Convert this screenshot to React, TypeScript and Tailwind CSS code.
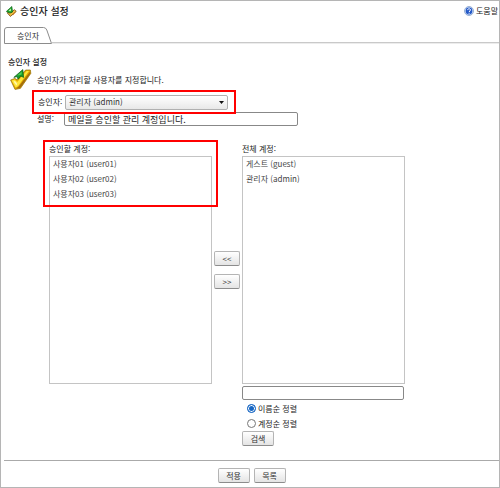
import { useState } from "react";

const ACCOUNTS = [
  { id: "guest", name: "게스트" },
  { id: "admin", name: "관리자" },
];

const APPROVED = [
  { id: "user01", name: "사용자01" },
  { id: "user02", name: "사용자02" },
  { id: "user03", name: "사용자03" },
];

const BUTTON =
  "h-[15px] rounded-xs border border-[#b4b4b4] border-b-[#8c8c8c] bg-linear-to-b from-white to-[#e4e4e4] text-[8px] leading-3 text-[#333]";

// Green pencil tip resting on a thick gold check mark
function CheckIcon({ className }: { className: string }) {
  return (
    <svg viewBox="0 0 22 21" className={className} aria-hidden="true">
      <path d="M0.6 11 5 9.4 7 10.8 15.6 1 20.4 1 20.8 4.4 10.4 19.4 5 20.4Z" fill="#e3ab00" stroke="#94700c" strokeWidth="0.7" />
      <path d="M1.6 11.6 4.6 10.4 7.2 13 16.6 2 19 2 8 17.2 5.6 18.4Z" fill="#ffe63c" />
      <path d="M3.6 12.6 5 12 7.2 14.8 6.4 16.4Z" fill="#fff9b0" />
      <path d="M8.8 17.6 20.2 2.4 20.4 4.4 10.4 18.8 6.2 19.6Z" fill="#a36c0c" />
      <path d="M3.8 8.4 12.8 0.6 13.6 8.4 10.8 7 8.2 10.2 7 7.6Z" fill="#189a2a" stroke="#0b5e18" strokeWidth="0.7" />
      <path d="M7.2 6.4 11.8 2.4 11.6 5.4 9.2 6.2Z" fill="#4fcf55" />
    </svg>
  );
}

function TitleIcon() {
  return (
    <svg viewBox="0 0 11 11" className="h-[11px] w-[11px]" aria-hidden="true">
      <path d="M1.2 6.8 4.4 10.4 10.2 5.4 8.4 3.6 5 7 3.4 5.8Z" fill="#f0c040" stroke="#6b4310" strokeWidth="0.8" />
      <path d="M0.4 5.4 5.8 0.5 6.6 6 3.8 7Z" fill="#22a82c" stroke="#0c6218" strokeWidth="0.7" />
      <path d="M2.6 4.8 5 2.4 4.8 5.2Z" fill="#c9f9be" />
      <path d="M7 7.2 10 5.8 6.8 9.4Z" fill="#c87418" />
    </svg>
  );
}

function HelpIcon() {
  return (
    <svg viewBox="0 0 10 10" className="h-[10px] w-[10px]" aria-hidden="true">
      <circle cx="5" cy="5" r="4.5" fill="#dde8f8" stroke="#7f9dcc" strokeWidth="0.8" />
      <circle cx="5" cy="5" r="3.4" fill="#2459c8" />
      <path d="M3.6 4.1C3.6 2.3 6.5 2.3 6.5 4 6.5 5 5.1 4.9 5.1 6M5.1 6.8V7.8" fill="none" stroke="#fff" strokeWidth="1" />
    </svg>
  );
}

type ListProps = {
  id: string;
  label: string;
  items: { id: string; name: string }[];
};

function AccountList({ id, label, items }: ListProps) {
  return (
    <>
      <label htmlFor={id} className="mb-px block h-3">{label}</label>
      <select
        id={id}
        multiple
        className="block h-[228px] w-full appearance-none overflow-hidden border border-[#c4c4c4] bg-white px-0 pt-px pb-0 text-[8px] text-[#444]"
      >
        {items.map((a) => (
          <option key={a.id} value={a.id} className="h-[15px] min-h-0 px-[3px] py-0 leading-[15px]">
            {a.name} ({a.id})
          </option>
        ))}
      </select>
    </>
  );
}

function SortOption({ value, label, sort, onChange }: { value: string; label: string; sort: string; onChange: (v: string) => void }) {
  return (
    <label className="flex h-[15px] items-center gap-0.5 pl-[5px]">
      <input
        type="radio"
        name="sort"
        value={value}
        checked={sort === value}
        onChange={() => onChange(value)}
        className="h-[9px] w-[9px] appearance-none rounded-full border border-[#777] bg-white checked:border-[#1767c4] checked:bg-[#1767c4] checked:shadow-[inset_0_0_0_1px_white]"
      />
      {label}
    </label>
  );
}

export default function App() {
  const [sort, setSort] = useState("name");
  const [desc, setDesc] = useState("메일을 승인할 관리 계정입니다.");

  return (
    <div className="border border-[#b5b5b5] bg-white font-['Noto_Sans_CJK_KR',sans-serif] text-[8px] leading-3 text-[#222]" lang="ko">
      {/* Header */}
      <header className="flex h-5 items-center justify-between pl-[5px]">
        <h1 className="flex items-center gap-[3px] text-[10px] font-medium">
          <TitleIcon />
          승인자 설정
        </h1>
        <a href="#help" className="flex items-center gap-0.5 pr-px">
          <HelpIcon />
          도움말
        </a>
      </header>

      {/* Tab */}
      <nav className="mt-1.5 flex items-end pl-[3px]">
        <a href="#approver" className="relative flex h-[17px] w-12 items-center pl-[13px] text-[#333]">
          <svg viewBox="0 0 48 17" className="absolute inset-0 h-full w-full" fill="none" stroke="#8c8c8c" aria-hidden="true">
            <path d="M0.5 16.5V3Q0.5 0.5 3 0.5H39.5Q41.8 0.5 42.8 3L47.5 16.5H0.5" />
          </svg>
          승인자
        </a>
        <div className="h-0.5 flex-1 border-t border-[#c9c9c9] bg-[#ececec]" />
      </nav>

      {/* Form */}
      <main className="pt-3">
        <h2 className="pl-[7px] font-medium">승인자 설정</h2>
        <div className="mt-px flex items-center gap-[5px] pl-[9px]">
          <CheckIcon className="h-[21px] w-[22px]" />
          <p>승인자가 처리할 사용자를 지정합니다.</p>
        </div>

        <div className="relative z-10 ml-[31px] flex h-6 w-[204px] items-center border-2 border-[#f00] pl-1">
          <label htmlFor="approver" className="w-[27px]">승인자:</label>
          <div className="relative">
            <select
              id="approver"
              className="block h-[15px] w-[163px] appearance-none rounded-xs border border-[#b0b0b0] bg-linear-to-b from-white to-[#e8e8e8] pl-[3px] text-[8px] leading-3 text-[#333]"
            >
              <option>관리자 (admin)</option>
            </select>
            <svg viewBox="0 0 5 3" className="pointer-events-none absolute top-1.5 right-1 h-[3px] w-[5px]" aria-hidden="true">
              <path d="M0 0H5L2.5 3Z" fill="#111" />
            </svg>
          </div>
        </div>
        <div className="-mt-0.5 flex items-center pl-9">
          <label htmlFor="desc" className="w-[27px]">설명:</label>
          <input
            id="desc"
            value={desc}
            onChange={(e) => setDesc(e.target.value)}
            className="h-[14px] w-[234px] rounded-xs border border-[#888] px-[3px] text-[9px] leading-3"
          />
        </div>

        <div className="mt-[17px] flex pl-12">
          <div className="relative w-[163px]">
            <AccountList id="approved" label="승인할 계정:" items={APPROVED} />
            <div className="pointer-events-none absolute -top-[3px] -left-1.5 h-[67px] w-[175px] border-2 border-[#f00]" />
          </div>
          <div className="flex w-[30px] flex-col items-center gap-2 pt-[108px]">
            <button type="button" aria-label="추가" className={`${BUTTON} w-[26px]`}>&lt;&lt;</button>
            <button type="button" aria-label="제거" className={`${BUTTON} w-[26px]`}>&gt;&gt;</button>
          </div>
          <div className="w-[163px]">
            <AccountList id="all" label="전체 계정:" items={ACCOUNTS} />
            <input aria-label="계정 검색" className="mt-0.5 mb-px block h-[14px] w-[162px] rounded-xs border border-[#888] px-[3px]" />
            <SortOption value="name" label="이름순 정렬" sort={sort} onChange={setSort} />
            <SortOption value="account" label="계정순 정렬" sort={sort} onChange={setSort} />
            <button type="button" className={`${BUTTON} block w-8`}>검색</button>
          </div>
        </div>
      </main>

      {/* Footer */}
      <footer className="mt-[14px] ml-[3px] flex justify-center gap-1 border-t border-[#aaa] pt-[7px] pb-1">
        <button type="submit" className={`${BUTTON} w-8`}>적용</button>
        <button type="button" className={`${BUTTON} w-8`}>목록</button>
      </footer>
    </div>
  );
}
